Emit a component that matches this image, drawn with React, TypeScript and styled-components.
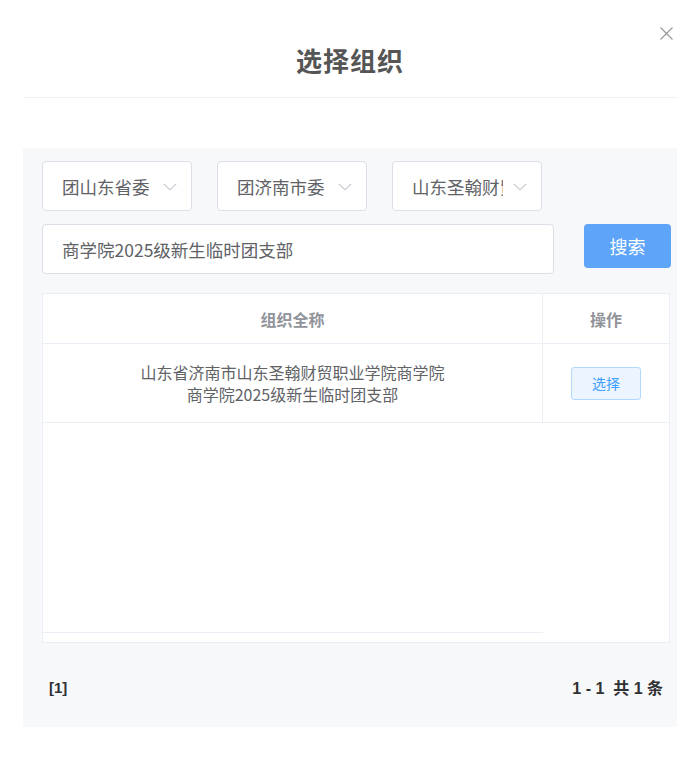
import React from "react";
import styled, { createGlobalStyle } from "styled-components";

const GlobalStyle = createGlobalStyle`
  html, body {
    margin: 0;
    padding: 0;
    background: #ffffff;
  }
  body {
    font-family: "Liberation Sans", "Noto Sans CJK SC", sans-serif;
  }
  * { box-sizing: border-box; }
`;

const Dialog = styled.div`
  width: 697px;
  padding: 0 20px 0 23px;
`;

const Header = styled.div`
  position: relative;
  height: 98px;
  display: flex;
  align-items: center;
  justify-content: center;
  border-bottom: 1px solid #f0f0f0;
`;

const Title = styled.h2`
  margin: 0;
  padding-top: 22px;
  font-family: "Noto Sans CJK SC", sans-serif;
  font-size: 26px;
  font-weight: 700;
  color: #555555;
  letter-spacing: 1px;
`;

const Close = styled.button`
  position: absolute;
  right: 2px;
  top: 24px;
  width: 18px;
  height: 18px;
  padding: 0;
  border: none;
  background: transparent;
  display: flex;
  align-items: center;
  justify-content: center;
  cursor: pointer;
`;

const Spacer = styled.div`
  height: 50px;
`;

const Panel = styled.div`
  background: #f7f8fa;
  height: 579px;
  padding: 13px 5px 0 19px;
  display: flex;
  flex-direction: column;
`;

const FilterRow = styled.div`
  display: flex;
  gap: 25px;
  margin-bottom: 13px;
`;

const Select = styled.div`
  position: relative;
  width: 150px;
  height: 50px;
  background: #fff;
  border: 1px solid #dcdfe6;
  border-radius: 4px;
  padding: 0 38px 0 19px;
  display: flex;
  align-items: center;
`;

const SelectText = styled.span`
  font-family: "Noto Sans CJK SC", sans-serif;
  font-size: 17.5px;
  color: #606266;
  white-space: nowrap;
  overflow: hidden;
  width: 100%;
`;

const Chevron = styled.svg`
  position: absolute;
  right: 14px;
  top: 21px;
`;

const SearchRow = styled.div`
  display: flex;
  align-items: flex-start;
  gap: 30px;
  margin-bottom: 19px;
`;

const Input = styled.div`
  width: 512px;
  flex-shrink: 0;
  height: 50px;
  background: #fff;
  border: 1px solid #dcdfe6;
  border-radius: 4px;
  padding: 0 19px;
  display: flex;
  align-items: center;
  font-family: "Noto Sans CJK SC", sans-serif;
  font-size: 17.5px;
  color: #606266;
`;

const SearchButton = styled.button`
  width: 87px;
  flex-shrink: 0;
  height: 44px;
  border: none;
  border-radius: 4px;
  background: #5ea5fa;
  color: #fff;
  font-family: "Noto Sans CJK SC", sans-serif;
  font-size: 18px;
  padding: 0;
  cursor: pointer;
`;

const Table = styled.div`
  width: 628px;
  height: 350px;
  background: #fff;
  border: 1px solid #ebeef5;
  display: flex;
`;

const Column = styled.div<{ $main?: boolean }>`
  display: flex;
  flex-direction: column;
  ${(p) => (p.$main ? "width: 500px;" : "flex: 1;")}
`;

const HeadCell = styled.div<{ $divider?: boolean }>`
  height: 50px;
  display: flex;
  align-items: center;
  justify-content: center;
  border-bottom: 1px solid #ebeef5;
  ${(p) => (p.$divider ? "border-right: 1px solid #ebeef5;" : "")}
  font-family: "Noto Sans CJK SC", sans-serif;
  font-size: 16px;
  font-weight: 700;
  color: #909399;
`;

const BodyCell = styled.div<{ $divider?: boolean }>`
  height: 79px;
  display: flex;
  flex-direction: column;
  align-items: center;
  justify-content: center;
  border-bottom: 1px solid #ebeef5;
  ${(p) => (p.$divider ? "border-right: 1px solid #ebeef5;" : "")}
  font-family: "Noto Sans CJK SC", sans-serif;
  font-size: 16px;
  line-height: 22px;
  color: #606266;
  text-align: center;
`;

const Filler = styled.div<{ $scrollLine?: boolean }>`
  flex: 1;
  ${(p) => (p.$scrollLine ? "border-bottom: 1px solid #ebeef5; margin-bottom: 9px;" : "")}
`;

const PickButton = styled.button`
  width: 70px;
  height: 33px;
  border: 1px solid #b3d8ff;
  border-radius: 3px;
  background: #ecf5ff;
  color: #409eff;
  font-family: "Noto Sans CJK SC", sans-serif;
  font-size: 14px;
  padding: 0;
  cursor: pointer;
`;

const Pager = styled.div`
  display: flex;
  justify-content: space-between;
  align-items: center;
  padding: 0 9px 0 7px;
  margin-top: 32px;
  font-family: "Liberation Sans", "Noto Sans CJK SC", sans-serif;
  font-weight: 700;
  color: #303133;
`;

const PageNum = styled.span`
  font-size: 15px;
`;

const Total = styled.span`
  font-size: 16px;
  white-space: pre;
`;

const selects = ["团山东省委", "团济南市委", "山东圣翰财贸职业学院"];

export default function App() {
  return (
    <>
      <GlobalStyle />
      <Dialog>
        <Header>
          <Title>选择组织</Title>
          <Close aria-label="关闭">
            <svg width="13" height="13" viewBox="0 0 13 13">
              <path d="M0.5 0.5 L12.5 12.5 M12.5 0.5 L0.5 12.5" stroke="#999" strokeWidth="1.2" fill="none" />
            </svg>
          </Close>
        </Header>
        <Spacer />
        <Panel>
          <FilterRow>
            {selects.map((s) => (
              <Select key={s}>
                <SelectText>{s}</SelectText>
                <Chevron width="14" height="8" viewBox="0 0 14 8">
                  <path d="M0.8 0.8 L7 6.8 L13.2 0.8" stroke="#c0c4cc" strokeWidth="1.1" fill="none" />
                </Chevron>
              </Select>
            ))}
          </FilterRow>
          <SearchRow>
            <Input>商学院2025级新生临时团支部</Input>
            <SearchButton>搜索</SearchButton>
          </SearchRow>
          <Table>
            <Column $main>
              <HeadCell $divider>组织全称</HeadCell>
              <BodyCell $divider>
                <span>山东省济南市山东圣翰财贸职业学院商学院</span>
                <span>商学院2025级新生临时团支部</span>
              </BodyCell>
              <Filler $scrollLine />
            </Column>
            <Column>
              <HeadCell>操作</HeadCell>
              <BodyCell>
                <PickButton>选择</PickButton>
              </BodyCell>
              <Filler />
            </Column>
          </Table>
          <Pager>
            <PageNum>[1]</PageNum>
            <Total>{"1 - 1  共 1 条"}</Total>
          </Pager>
        </Panel>
      </Dialog>
    </>
  );
}
